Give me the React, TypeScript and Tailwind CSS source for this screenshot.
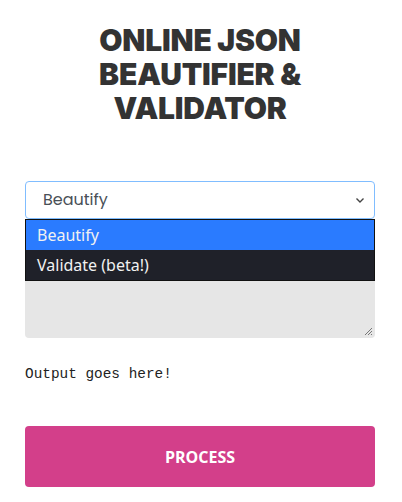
import { useState } from "react";

const options = ["Beautify", "Validate (beta!)"];

export default function App() {
  const [mode] = useState("Beautify");

  return (
    <div className="min-h-screen bg-white font-['Inter',sans-serif]">
      <div className="ml-[25px] w-[350px]">
        <h1 className="pt-[23px] text-center text-[30px] font-black leading-[34px] tracking-[-0.2px] text-[#333333]">
          ONLINE JSON
          <br />
          BEAUTIFIER &amp;
          <br />
          VALIDATOR
        </h1>

        <div className="relative mt-[56px]">
          <div className="flex h-[38px] items-center justify-between rounded-[4px] border border-[#80bdff] bg-white pl-[17px] pr-[8px] font-['Poppins','Noto_Sans',sans-serif] text-[16px] text-[#495057]">
            <span>{mode}</span>
            <svg width="12" height="12" viewBox="0 0 12 12" fill="none">
              <path d="M2.5 4.5 6 8l3.5-3.5" stroke="#444" strokeWidth="1.4" />
            </svg>
          </div>

          <div className="absolute left-0 right-0 top-[38px] z-10 border border-[#111] font-['Noto_Sans',sans-serif] text-[16px] text-[#f1f1f1]">
            {options.map((o, i) => (
              <div
                key={o}
                className={`flex h-[30px] items-center px-[11px] ${
                  i === 0 ? "bg-[#2a7bff]" : "bg-[#1f2129]"
                }`}
              >
                {o}
              </div>
            ))}
          </div>

          <div className="relative mt-[16px] h-[103px] rounded-[4px] bg-[#e6e6e6]">
            <svg
              className="absolute bottom-[2px] right-[2px]"
              width="9"
              height="9"
              viewBox="0 0 9 9"
            >
              <path d="M8 1 1 8M8 4 4 8M8 7 7 8" stroke="#777" strokeWidth="1" />
            </svg>
          </div>
        </div>

        <pre className="mt-[26px] font-['Liberation_Mono',monospace] text-[14.4px] leading-[20px] text-[#222]">
          Output goes here!
        </pre>

        <button className="mt-[42px] flex h-[61px] w-full items-center justify-center rounded-[4px] bg-[#d33f8a] font-['Open_Sans',sans-serif] text-[16px] font-bold text-white">
          PROCESS
        </button>
      </div>
    </div>
  );
}
